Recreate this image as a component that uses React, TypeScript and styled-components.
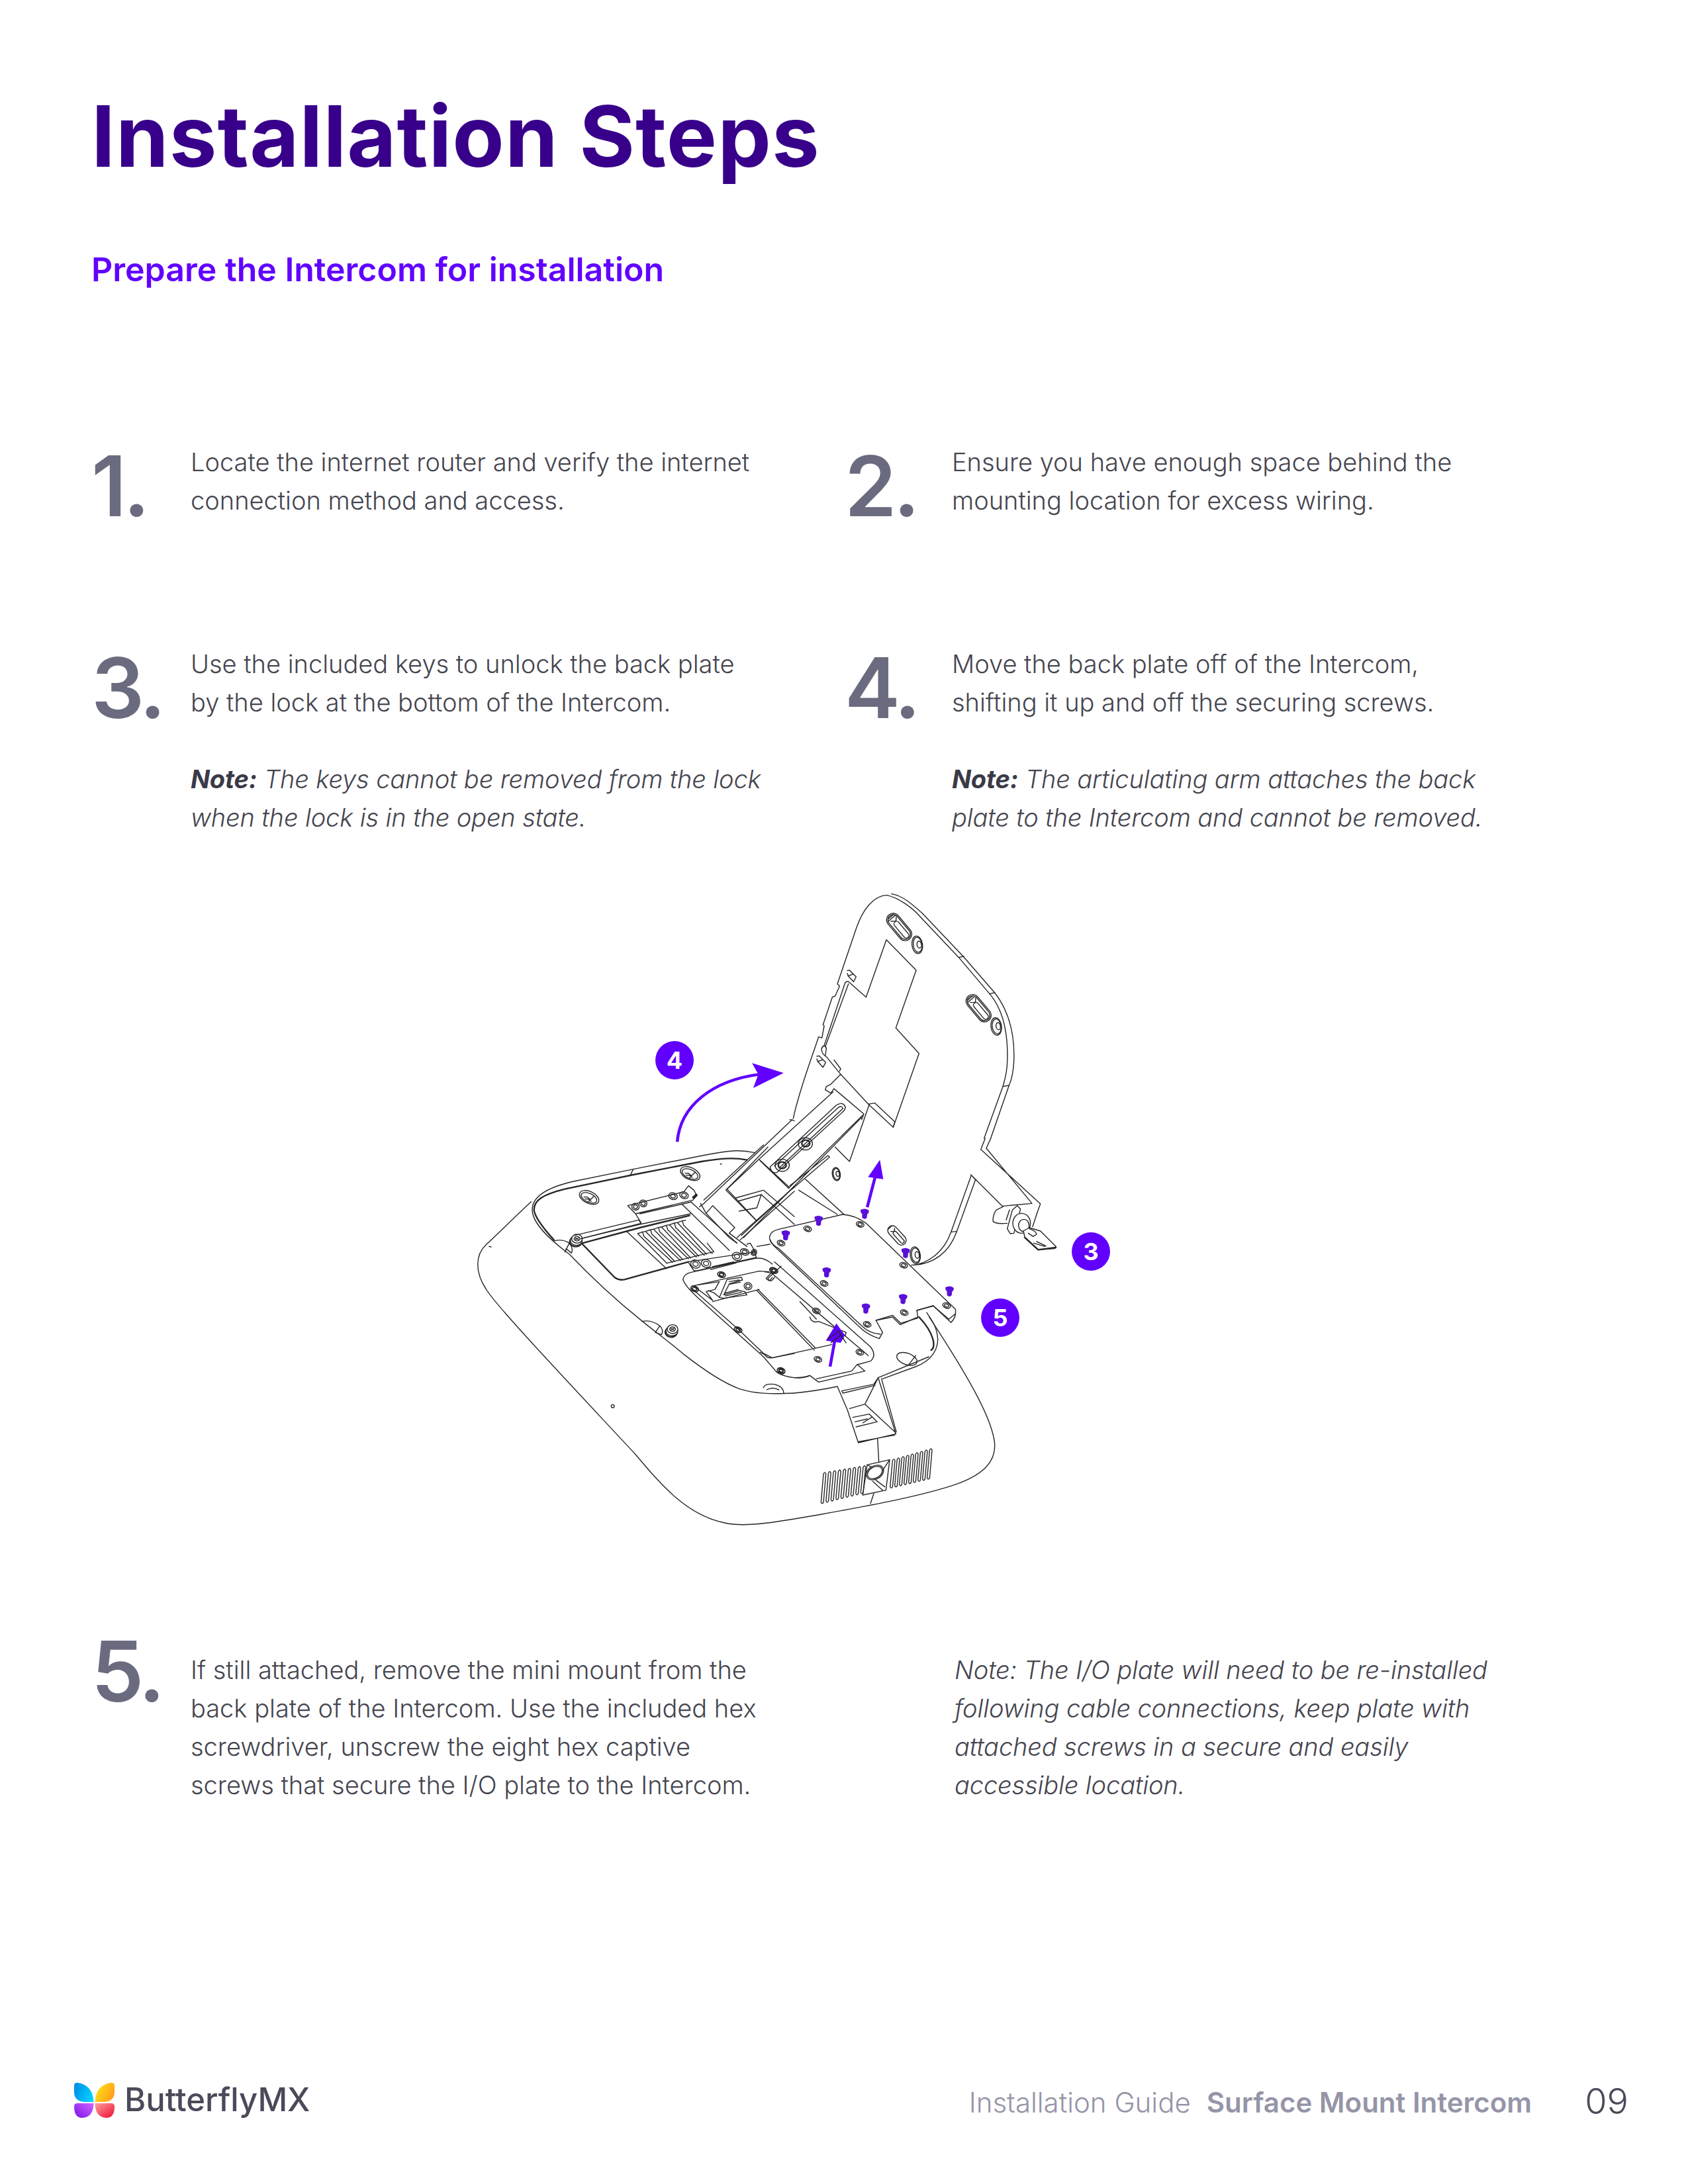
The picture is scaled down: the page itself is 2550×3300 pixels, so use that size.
import type { ReactNode } from 'react';
import styled, { createGlobalStyle } from 'styled-components';

const GlobalStyle = createGlobalStyle`
  html, body {
    margin: 0;
    padding: 0;
    background: #fff;
  }
`;

const Page = styled.div`
  width: 2550px;
  height: 3300px;
  box-sizing: border-box;
  padding: 126px 0 0 138px;
  display: flex;
  flex-direction: column;
  font-family: Inter, "Liberation Sans", sans-serif;
  overflow: hidden;
`;

const Title = styled.h1`
  margin: 0;
  font-size: 128px;
  line-height: 160px;
  font-weight: 700;
  letter-spacing: 1.1px;
  color: #38008a;
`;

const Subtitle = styled.h2`
  margin: 86px 0 0;
  font-size: 50px;
  line-height: 70px;
  font-weight: 600;
  color: #6200ff;
`;

const StepRow = styled.div<{ $top: number }>`
  display: grid;
  grid-template-columns: 1138px 1fr;
  margin-top: ${(p) => p.$top}px;
`;

const Step = styled.div<{ $numWidth?: number }>`
  display: grid;
  grid-template-columns: ${(p) => p.$numWidth ?? 150}px 1fr;
`;

const StepNumber = styled.div<{ $lift?: number }>`
  margin-top: ${(p) => -1 - (p.$lift ?? 0)}px;
  font-size: 126px;
  line-height: 132px;
  font-weight: 600;
  color: #6b6b80;
  letter-spacing: -5px;
`;

const Body = styled.div`
  font-size: 38px;
  line-height: 58px;
  font-weight: 300;
  color: #45454f;
`;

const Note = styled.p<{ $indent?: number }>`
  margin: 58px 0 0;
  font-style: italic;
  letter-spacing: -0.12px;
  ${(p) => (p.$indent ? `margin: 0 0 0 ${p.$indent}px;` : '')}
  b {
    font-weight: 700;
    color: #3a3a48;
  }
`;

const Figure = styled.div`
  position: relative;
  width: 1000px;
  height: 1020px;
  margin: 56px 0 0 542px;
`;

const Drawing = styled.svg`
  display: block;
  width: 100%;
  height: 100%;
  fill: none;
  stroke: #26262a;
  stroke-linejoin: round;
  stroke-linecap: round;

  & path,
  & ellipse,
  & circle,
  & rect {
    vector-effect: non-scaling-stroke;
    stroke-width: 1.4px;
  }
  & .thick {
    stroke-width: 2.4px;
  }
  & .solid {
    fill: #26262a;
  }
  & .purple {
    stroke: #6200ff;
    stroke-width: 4.5px;
    stroke-linecap: butt;
  }
  & .head {
    fill: #6200ff;
    stroke: none;
  }
  & .screw {
    fill: #5a10d8;
    stroke: #5a10d8;
  }
  & .white {
    fill: #fff;
  }
`;

const Badge = styled.span<{ $x: number; $y: number }>`
  position: absolute;
  left: ${(p) => p.$x}px;
  top: ${(p) => p.$y}px;
  width: 58px;
  height: 58px;
  border-radius: 50%;
  background: #6200ff;
  color: #fff;
  font-size: 36px;
  font-weight: 700;
  display: flex;
  align-items: center;
  justify-content: center;
`;

const Footer = styled.footer`
  margin: auto 0 0 -26px;
  height: 157px;
  padding-right: 90px;
  display: flex;
  align-items: flex-start;
`;

const Brand = styled.div`
  display: flex;
  align-items: center;
  gap: 15px;
  font-size: 49px;
  line-height: 60px;
  font-weight: 500;
  color: #4a4a5a;
`;

const GuideLabel = styled.div`
  margin-left: auto;
  padding-top: 4px;
  font-size: 42px;
  line-height: 60px;
  font-weight: 300;
  color: #9595a8;
  b {
    font-weight: 600;
    margin-left: 24px;
  }
`;

const PageNum = styled.div`
  margin-left: 80px;
  padding-top: 2px;
  font-size: 54px;
  line-height: 60px;
  font-weight: 300;
  color: #4a4a5a;
`;

const Logo = () => (
  <svg width="61" height="53" viewBox="0 0 61 53">
    <defs>
      <linearGradient id="wingA" x1="1" y1="0.7" x2="0" y2="0.3">
        <stop offset="0" stopColor="#00d6ff" />
        <stop offset="1" stopColor="#0090e6" />
      </linearGradient>
      <linearGradient id="wingB" x1="0" y1="0.3" x2="1" y2="0.8">
        <stop offset="0" stopColor="#ffe414" />
        <stop offset="1" stopColor="#ff981e" />
      </linearGradient>
      <linearGradient id="wingC" x1="1" y1="0" x2="0" y2="1">
        <stop offset="0" stopColor="#d066ff" />
        <stop offset="1" stopColor="#7a10e8" />
      </linearGradient>
      <linearGradient id="wingD" x1="0" y1="0" x2="1" y2="1">
        <stop offset="0" stopColor="#ffa0a0" />
        <stop offset="1" stopColor="#ee0c30" />
      </linearGradient>
    </defs>
    <path fill="url(#wingA)" d="M0 4Q0 0 5 0Q28 3 29.5 29L14 29Q0 27 0 14Z" />
    <path fill="url(#wingB)" d="M61 4Q61 0 56 0Q33 3 31.5 29L47 29Q61 27 61 14Z" />
    <path fill="url(#wingC)" d="M0 36Q0 31 5 31L29.5 31Q29 53 11 53Q0 52 0 36Z" />
    <path fill="url(#wingD)" d="M61 36Q61 31 56 31L31.5 31Q32 53 50 53Q61 52 61 36Z" />
  </svg>
);

// each group is read off a 3x crop of the page at that origin
const Crop = ({ x, y, children }: { x: number; y: number; children: ReactNode }) => (
  <g transform={`translate(${x} ${y}) scale(${1 / 3})`}>{children}</g>
);

const Ring = ({ x, y, rx = 18, ry = 12, rot = 20 }: { x: number; y: number; rx?: number; ry?: number; rot?: number }) => (
  <g transform={`translate(${x} ${y}) rotate(${rot})`}>
    <ellipse rx={rx} ry={ry} />
    <ellipse rx={rx * 0.55} ry={ry * 0.55} />
  </g>
);

const Recess = ({ x, y }: { x: number; y: number }) => (
  <g transform={`translate(${x} ${y}) rotate(25)`}>
    <ellipse rx={47} ry={27} />
    <ellipse cy={2} rx={38} ry={20} />
    <path d="M-22 8L-8 2L8 6M-14 14L0 8L16 12M5 20L18 -16" />
  </g>
);

const Bolt = ({ x, y }: { x: number; y: number }) => (
  <g transform={`translate(${x} ${y})`}>
    <ellipse cx={-6} cy={14} rx={27} ry={22} className="thick" />
    <ellipse cx={-3} cy={8} rx={27} ry={22} className="white" />
    <ellipse rx={24} ry={20} className="white" />
    <ellipse rx={13} ry={10} />
    <path d="M-8 -4L8 5M-8 5L8 -5" />
  </g>
);

const Slot = ({ x, y }: { x: number; y: number }) => (
  <g transform={`translate(${x} ${y}) rotate(50)`}>
    <rect x={-72} y={-30} width={144} height={60} rx={30} />
    <rect x={-66} y={-24} width={132} height={48} rx={24} />
    <rect x={-30} y={-12} width={92} height={24} rx={12} />
    <path d="M-44 -20L-30 -6L-44 12M-60 -14L-60 14M-52 -20L-52 20" />
  </g>
);

const Washer = ({ x, y }: { x: number; y: number }) => (
  <g transform={`translate(${x} ${y}) rotate(-8)`}>
    <ellipse rx={24} ry={40} />
    <ellipse cx={2} rx={20} ry={34} />
    <ellipse cx={9} rx={10} ry={16} />
  </g>
);

const LockMark = ({ x, y }: { x: number; y: number }) => (
  <path d={`M${x - 18} ${y - 22}L${x - 8} ${y - 24}L${x + 22} ${y + 6}L${x + 10} ${y + 28}L${x - 14} ${y + 2}L${x + 8} ${y - 6}M${x - 14} ${y + 2}L${x - 18} ${y - 10}Z`} />
);

const Screw = ({ x, y }: { x: number; y: number }) => (
  <path
    className="screw"
    d={`M${x - 9} ${y - 8}Q${x} ${y - 13} ${x + 9} ${y - 7}L${x + 8} ${y - 2}L${x + 5} ${y}L${x + 4} ${y + 9}Q${x} ${y + 13} ${x - 5} ${y + 9}L${x - 5} ${y}L${x - 8} ${y - 3}Z`}
  />
);

const SCREWS = [
  [795, 840],
  [873, 806],
  [982, 790],
  [1079, 881],
  [892, 926],
  [1183, 970],
  [1073, 988],
  [985, 1010],
];

const PLATE_HOLES = [
  [540, 685],
  [660, 620],
  [898, 600],
  [1095, 785],
  [735, 868],
  [930, 1053],
  [1098, 1000],
  [1290, 968],
];

const FRAME_RINGS = [
  [270, 828],
  [148, 893],
  [508, 810],
  [345, 1078],
  [700, 992],
  [707, 1212],
  [897, 1180],
  [540, 1265],
];

const VENT_SLATS = [...Array(6).keys()];
const GRILLE_LEFT = [...Array(9).keys()];
const GRILLE_RIGHT = [...Array(9).keys()];

const VentSlat = ({ i }: { i: number }) => {
  const x = 490 + i * 36;
  const y = 402 - i * 10;
  const yb = 532 - i * 8;
  return (
    <path
      d={`M${x} ${y}L${x + 22} ${y - 8}L${x + 28} ${y + 12}L${x + 158} ${yb}M${x} ${y}L${x + 132} ${yb + 4}M${x + 22} ${y - 8}L${x + 36} ${y - 10}`}
    />
  );
};

const GrilleSlot = ({ x, top, bottom }: { x: number; top: number; bottom: number }) => (
  <path d={`M${x} ${top + 6}L${x - 11} ${bottom - 6}Q${x - 7} ${bottom + 6} ${x} ${bottom - 5}L${x + 11} ${top + 6}Q${x + 7} ${top - 7} ${x} ${top + 6}Z`} />
);

const Illustration = () => (
  <Drawing viewBox="680 1320 1000 1020">
    {/* shell outline */}
    <g transform={`translate(680 1320) scale(${1000 / 1568} ${1020 / 1568})`}>
      <path d="M192 762C150 800 110 840 85 862C60 885 58 925 85 965C110 1005 250 1150 440 1350C500 1420 560 1490 650 1508C700 1520 780 1505 880 1488C1000 1467 1120 1445 1200 1418C1265 1395 1292 1365 1290 1325C1285 1270 1235 1180 1135 1030" />
      <path d="M92 866L97 867" />
    </g>

    {/* rim and vent compartment */}
    <Crop x={800} y={1730}>
      <path d="M1020 35C950 20 900 25 800 45L470 110L200 165C90 190 15 230 12 290C10 350 80 420 180 495C290 610 400 710 500 790C560 840 630 890 700 950C790 1020 880 1080 950 1105C1020 1128 1090 1130 1200 1125" />
      <path className="thick" d="M985 68C920 55 860 62 780 75L470 135L160 200C60 225 20 250 20 295C25 330 60 375 110 430" />
      <path d="M470 110L455 140M865 85L870 88" />
      <circle cx={377} cy={1184} r={7} />
      <Recess x={270} y={238} />
      <Recess x={728} y={130} />
      <path d="M110 435Q150 425 180 445Q200 470 190 490L165 470M180 445L160 485" />
      <path d="M510 800Q550 790 590 820Q610 840 598 860L570 850M590 820L570 850" />
      <path d="M1060 1100Q1065 1080 1110 1085Q1150 1095 1152 1125M1075 1110Q1100 1095 1130 1110" />
      <Bolt x={215} y={425} />
      <Bolt x={648} y={835} />

      <path d="M205 410L495 340L505 355L232 425" />
      <path className="thick" d="M240 445L500 375L725 320" />
      <path d="M232 425L500 360L730 312" />
      <path className="thick" d="M240 450L385 600Q405 615 430 610L720 530" />
      <path d="M445 275L700 212L720 185L745 205L757 228L740 250L480 312ZM500 312L735 258M480 312L505 352" />
      <path d="M690 268L905 478M735 262L940 445M440 392L620 560" />
      {VENT_SLATS.map((i) => (
        <VentSlat key={i} i={i} />
      ))}
      <path d="M622 536L835 484L805 445" />
      <Ring x={480} y={280} rx={17} ry={15} />
      <Ring x={515} y={265} rx={17} ry={15} />
      <Ring x={650} y={232} rx={20} ry={15} />
      <Ring x={700} y={228} rx={20} ry={15} />
      <path className="solid" d="M738 238L755 222L760 228L745 244Z" />

      {/* second bracket and electronics */}
      <path className="white" d="M718 530L1020 485L1028 510L760 570L745 570Z" />
      <path d="M820 565L935 535M830 552L925 530" />
      <Ring x={752} y={540} rx={22} ry={18} />
      <Ring x={800} y={537} rx={22} ry={18} />
      <Ring x={940} y={505} rx={22} ry={18} />
      <Ring x={975} y={485} rx={20} ry={14} />
      <Ring x={1017} y={487} rx={12} ry={14} />
      <path d="M695 610Q700 585 730 578L1020 515Q1060 505 1100 540M695 610Q705 640 760 690L1060 960L1120 1030Q1150 1050 1200 1055" />
      <path d="M735 640L1040 572L1085 575M735 650L945 835L1060 945L1100 965L1200 945" />
      <Ring x={870} y={588} />
      <Ring x={748} y={652} />
      <Ring x={1105} y={568} />
      <Ring x={990} y={640} rx={18} ry={16} />
      <Ring x={945} y={838} />
      <Ring x={1140} y={1022} />
      <path d="M860 692L895 610L960 600L965 612L905 630L880 680L950 660L975 665L985 680L880 695Z" />
      <path d="M905 620L950 612M905 632L955 622M885 672L945 655M888 684L960 668" />
      <path d="M760 635L860 620L840 655L800 665L830 705L745 640M810 660L835 670L860 690" />
      <path d="M1095 580L1072 605Q1085 625 1100 600" />

      {/* arm root */}
      <path d="M790 250L1060 0M775 265L800 310L830 275L930 375L905 400L985 460M800 310L905 420L940 445" />
      <path d="M985 450L1000 445L1020 480L1005 495M940 420L1200 190M955 430L1200 210M890 205L1080 10M890 205L1030 345L1200 190" />
      <path d="M935 240L1060 205L1200 325M945 255L1050 225L1200 360M1050 225L1030 285L950 300M1030 460L1090 450" />
    </Crop>

    {/* back plate */}
    <Crop x={1180} y={1340}>
      <path d="M55 1050C80 930 130 800 170 680L185 685L195 630L190 625L232 500L245 495L265 450L255 440L340 190C370 100 420 40 480 38C530 50 590 90 630 135L805 320L945 485C1000 550 1030 650 1025 790C1025 840 1015 870 1005 905L920 1140" />
      <path d="M500 32C550 40 590 75 640 120L825 315L968 480C1030 560 1060 660 1055 790C1052 850 1042 880 1033 900L950 1140" />
      <path d="M805 320L828 315M945 485L968 480M1005 905L1033 900" />
      <path d="M477 240L612 378L520 640L625 755L508 1090L395 985L270 850L205 770Q185 760 183 735Q185 725 195 720L290 435Q300 425 308 432L385 500Z" />
      <path d="M200 725L305 440M195 720Q205 725 205 735L200 765M240 785L270 825L265 835M395 985L425 980L515 1065L508 1090" />
      <path d="M270 850L225 895L205 905L200 920L225 935L240 915L375 1030L365 1055" />
      <Slot x={535} y={182} />
      <Slot x={895} y={550} />
      <Washer x={617} y={263} />
      <Washer x={975} y={633} />
      <LockMark x={318} y={402} />
      <LockMark x={180} y={790} />
    </Crop>

    {/* lock and key */}
    <Crop x={1440} y={1720}>
      <path d="M125 50L395 297L383 330L360 400M150 45L357 295L225 307M125 50L145 0M150 45L170 0" />
      <path d="M80 165L225 310M80 165L103 190" />
      <path d="M225 310L195 325Q180 345 180 375Q190 390 245 385" />
      <path d="M290 305L305 320L275 430L258 432L245 410L268 325ZM255 325L240 370" />
      <ellipse cx={310} cy={385} rx={40} ry={45} className="white" />
      <ellipse cx={320} cy={395} rx={24} ry={28} />
      <path className="white" d="M318 420L345 405L395 420L465 490L460 500L385 505L325 450Z" />
      <path className="thick" d="M325 450L385 505L465 495" />
      <path d="M345 410Q375 420 378 435L362 445L340 430M365 475L415 490M378 468L420 488" />
    </Crop>

    {/* arm, plate and lower compartment */}
    <Crop x={1000} y={1650}>
      <path d="M590 125L185 510L170 520M600 130L580 125M295 440L445 300M295 440L430 585L360 650M445 300L775 0M445 312L575 437M440 305L575 430M575 435L910 105" />
      <path d="M370 660L905 115M590 440L760 295L752 288L580 425M940 55L850 315L785 250" />
      <path d="M490 340L790 60Q820 40 832 70L825 85L520 365Q495 370 490 340ZM510 335L800 70Q815 60 820 75L530 345" />
      <ellipse cx={650} cy={235} rx={32} ry={28} />
      <ellipse cx={652} cy={233} rx={18} ry={15} className="thick" />
      <ellipse cx={545} cy={332} rx={32} ry={28} />
      <ellipse cx={545} cy={332} rx={18} ry={15} className="thick" />
      <g transform="translate(790 372) rotate(-8) scale(0.75)">
        <ellipse rx={24} ry={40} />
        <ellipse cx={2} rx={20} ry={34} />
        <ellipse cx={9} rx={10} ry={16} />
      </g>
      <path d="M620 445L795 555M650 395L825 555" />
      <path d="M1402 377L1310 635C1280 720 1210 780 1130 785M1420 400L1335 635C1300 730 1230 780 1140 785M1310 635L1335 632" />
      <g transform="translate(1065 650) rotate(48) scale(0.72)">
        <rect x={-72} y={-30} width={144} height={60} rx={30} />
        <rect x={-30} y={-12} width={92} height={24} rx={12} />
        <path d="M-66 -16L-66 16M-44 -20L-30 -6L-44 12" />
      </g>
      <g transform="translate(1148 740) rotate(-8) scale(0.95)">
        <ellipse rx={24} ry={40} />
        <ellipse cx={2} rx={20} ry={34} />
        <ellipse cx={9} rx={10} ry={16} />
      </g>

      {/* frame, right end */}
      <path d="M545 800L945 1155Q975 1195 945 1220L885 1236M510 770L545 800M540 790L480 845Q490 870 510 840M495 820L935 1195" />
      <path d="M600 1295Q640 1300 670 1285" />
      <path d="M670 1020Q680 1050 710 1040L835 1090L830 1105L770 1110M465 815L495 820" />
      <path d="M230 950L440 895M435 895L695 1160M430 900L690 1170M770 1145L500 1205Q475 1208 465 1190L445 1180" />
      <path d="M625 950L700 1030" />
      {FRAME_RINGS.map(([x, y]) => (
        <Ring key={`${x}-${y}`} x={x} y={y} />
      ))}
      <path d="M1000 1300L1150 1245C1230 1215 1250 1160 1250 1120C1245 1060 1225 1040 1200 1000" />
      <path className="thick" d="M1165 1020C1240 1100 1240 1160 1220 1170" />
      <ellipse cx={1110} cy={1210} rx={48} ry={26} transform="rotate(20 1110 1210)" />
      <path d="M1115 1240L1150 1195" />

      {/* I/O plate */}
      <path
        className="white"
        d="M820 555Q880 560 925 595L1330 985Q1335 1020 1310 1045L1230 970L1155 990L1160 1020L1080 1055L1045 1020L970 1035L1000 1090L985 1118Q930 1100 895 1065L510 700Q480 670 490 650Q495 630 530 622Z"
      />
      <path d="M490 670Q500 695 530 710L905 1060Q940 1095 990 1098M1230 970L1300 1030L1330 1005" />
      <path d="M970 1035L1045 1012L1082 1048L1160 1025M1155 990L1230 968" />
      {PLATE_HOLES.map(([x, y]) => (
        <Ring key={`${x}-${y}`} x={x} y={y} />
      ))}
    </Crop>

    {/* neck and speaker grille */}
    <Crop x={1120} y={2050}>
      <path d="M240 165Q340 155 435 135L480 240L530 390L700 350L620 95L850 0M620 95L600 125L455 155L460 165L605 130M620 95L560 215L490 235M560 215L700 345M635 100L702 340M530 385L695 355" />
      <path d="M505 275L580 260L615 295L520 318M550 300L590 275M515 295L570 282" />
      <path d="M240 95Q280 95 310 85L350 115L560 65L525 35L500 65L340 100" />
      <path d="M617 370L623 478M600 620L585 665" />
      <path d="M570 490L672 467L655 605L550 627Z" />
      <ellipse cx={605} cy={525} rx={42} ry={30} transform="rotate(-30 605 525)" />
      <ellipse cx={605} cy={525} rx={36} ry={25} transform="rotate(-30 605 525)" />
      <path d="M595 565L640 605M610 560L650 590M570 490L590 500M672 467L640 515" />
      {GRILLE_LEFT.map((i) => (
        <GrilleSlot key={`l${i}`} x={372 + i * 22.5} top={525 - i * 3.8} bottom={665 - i * 5.6} />
      ))}
      {GRILLE_RIGHT.map((i) => (
        <GrilleSlot key={`r${i}`} x={685 + i * 21} top={465 - i * 6} bottom={595 - i * 5} />
      ))}
    </Crop>

    {/* purple marks */}
    <g transform={`translate(680 1320) scale(${1000 / 1568} ${1020 / 1568})`}>
      <path className="purple" d="M538 623C545 540 620 480 735 466" />
      <path className="head" d="M715 440L790 463L718 498L730 466Z" />
      <path className="purple" d="M988 775L1008 700" />
      <path className="head" d="M1018 665L990 705L1026 710Z" />
      <path className="purple" d="M900 1145L912 1080" />
      <path className="head" d="M915 1045L890 1085L925 1090L935 1072Z" />
      <path d="M895 1082L920 1062L932 1080M902 1090L925 1072L938 1090" />
      {SCREWS.map(([x, y]) => (
        <Screw key={`${x}-${y}`} x={x} y={y} />
      ))}
    </g>
  </Drawing>
);

export default function App() {
  return (
    <>
      <GlobalStyle />
      <Page>
        <Title>Installation Steps</Title>
        <Subtitle>Prepare the Intercom for installation</Subtitle>

        <StepRow $top={227}>
          <Step>
            <StepNumber>1.</StepNumber>
            <Body>
              Locate the internet router and verify the internet
              <br />
              connection method and access.
            </Body>
          </Step>
          <Step $numWidth={162}>
            <StepNumber>2.</StepNumber>
            <Body>
              Ensure you have enough space behind the
              <br />
              mounting location for excess wiring.
            </Body>
          </Step>
        </StepRow>

        <StepRow $top={174}>
          <Step>
            <StepNumber>3.</StepNumber>
            <Body>
              Use the included keys to unlock the back plate
              <br />
              by the lock at the bottom of the Intercom.
              <Note>
                <b>Note:</b> The keys cannot be removed from the lock
                <br />
                when the lock is in the open state.
              </Note>
            </Body>
          </Step>
          <Step $numWidth={162}>
            <StepNumber>4.</StepNumber>
            <Body>
              Move the back plate off of the Intercom,
              <br />
              shifting it up and off the securing screws.
              <Note>
                <b>Note:</b> The articulating arm attaches the back
                <br />
                plate to the Intercom and cannot be removed.
              </Note>
            </Body>
          </Step>
        </StepRow>

        <Figure>
          <Illustration />
          <Badge $x={310} $y={253}>4</Badge>
          <Badge $x={939} $y={542}>3</Badge>
          <Badge $x={802} $y={642}>5</Badge>
        </Figure>

        <StepRow $top={154}>
          <Step>
            <StepNumber $lift={34}>5.</StepNumber>
            <Body>
              If still attached, remove the mini mount from the
              <br />
              back plate of the Intercom. Use the included hex
              <br />
              screwdriver, unscrew the eight hex captive
              <br />
              screws that secure the I/O plate to the Intercom.
            </Body>
          </Step>
          <Body>
            <Note $indent={166}>
              Note: The I/O plate will need to be re-installed
              <br />
              following cable connections, keep plate with
              <br />
              attached screws in a secure and easily
              <br />
              accessible location.
            </Note>
          </Body>
        </StepRow>

        <Footer>
          <Brand>
            <Logo />
            ButterflyMX
          </Brand>
          <GuideLabel>
            Installation Guide<b>Surface Mount Intercom</b>
          </GuideLabel>
          <PageNum>09</PageNum>
        </Footer>
      </Page>
    </>
  );
}
